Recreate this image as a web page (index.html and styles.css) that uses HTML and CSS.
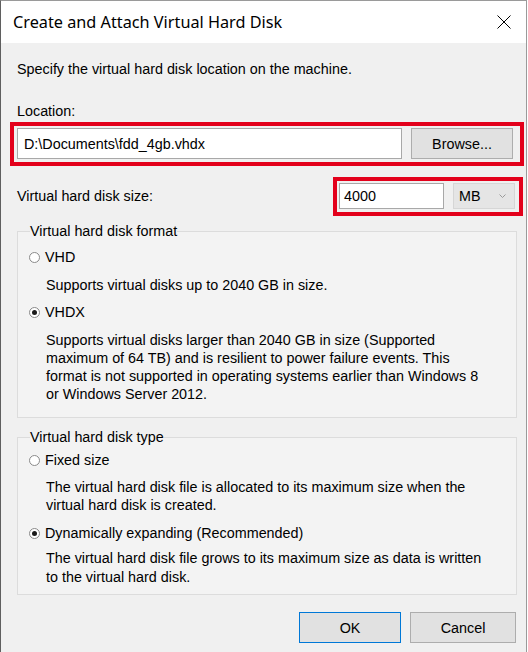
FILE: index.html
```html
<!DOCTYPE html>
<html>
<head>
<meta charset="utf-8">
<link rel="stylesheet" href="styles.css">
<title>Create and Attach Virtual Hard Disk</title>
</head>
<body>
<div class="window">
  <div class="titlebar">
    <span class="title">Create and Attach Virtual Hard Disk</span>
    <svg class="close" width="14" height="14" viewBox="0 0 14 14"><path d="M0.5 0.5 L13.5 13.5 M13.5 0.5 L0.5 13.5" stroke="#000" stroke-width="1" fill="none"/></svg>
  </div>
  <div class="content">
    <p class="intro">Specify the virtual hard disk location on the machine.</p>
    <p class="label loc-label">Location:</p>
    <div class="redbox loc-box">
      <div class="textbox path">D:\Documents\fdd_4gb.vhdx</div>
      <div class="button browse">Browse...</div>
    </div>
    <div class="size-row">
      <span class="label">Virtual hard disk size:</span>
      <div class="redbox size-box">
        <div class="textbox size">4000</div>
        <div class="combo"><span>MB</span>
          <svg class="chev" width="7" height="4" viewBox="0 0 7 4"><path d="M0.5 0.5 L3.5 3.5 L6.5 0.5" stroke="#9a9a9a" fill="none"/></svg>
        </div>
      </div>
    </div>
    <fieldset class="group g-format">
      <legend>Virtual hard disk format</legend>
      <div class="radio first"><span class="dot"></span><span>VHD</span></div>
      <p class="desc d1">Supports virtual disks up to 2040 GB in size.</p>
      <div class="radio r2"><span class="dot on"></span><span>VHDX</span></div>
      <p class="desc d2">Supports virtual disks larger than 2040 GB in size (Supported<br>maximum of 64 TB) and is resilient to power failure events. This<br>format is not supported in operating systems earlier than Windows 8<br>or Windows Server 2012.</p>
    </fieldset>
    <fieldset class="group g-type">
      <legend>Virtual hard disk type</legend>
      <div class="radio first"><span class="dot"></span><span>Fixed size</span></div>
      <p class="desc d1">The virtual hard disk file is allocated to its maximum size when the<br>virtual hard disk is created.</p>
      <div class="radio r2"><span class="dot on"></span><span>Dynamically expanding (Recommended)</span></div>
      <p class="desc d3">The virtual hard disk file grows to its maximum size as data is written<br>to the virtual hard disk.</p>
    </fieldset>
    <div class="actions">
      <div class="button ok">OK</div>
      <div class="button cancel">Cancel</div>
    </div>
  </div>
</div>
</body>
</html>
```
FILE: styles.css
```css
html, body {
  margin: 0;
  padding: 0;
  background: #ffffff;
}
body {
  font-family: "Liberation Sans", Arial, sans-serif;
  font-size: 14.35px;
  line-height: 18px;
  color: #000;
}
.window {
  width: 527px;
  height: 652px;
  box-sizing: border-box;
  border-left: 1px solid #5f5f5f;
  border-top: 1px solid #9a9a9a;
  border-right: 1px solid #9a9a9a;
  display: flex;
  flex-direction: column;
  background: #f0f0f0;
}
.titlebar {
  height: 42px;
  flex: none;
  background: #ffffff;
  display: flex;
  align-items: center;
  justify-content: space-between;
  padding: 0 15px 0 12px;
}
.title {
  font-family: "Noto Sans", "Open Sans", sans-serif;
  font-size: 16.25px;
  color: #000;
  margin-top: -1px;
}
.close {
  display: block;
  margin-top: -1px;
}
.content {
  padding: 0 10px 0 16px;
  display: flex;
  flex-direction: column;
}
p {
  margin: 0;
}
.intro {
  margin-top: 17px;
}
.loc-label {
  margin-top: 24px;
}
.redbox {
  border: 4px solid #e3001b;
  display: flex;
  align-items: stretch;
  box-sizing: border-box;
}
.loc-box {
  margin: 2px -8px 0 -7px;
  padding: 2px 6px 3px 3px;
  gap: 9px;
}
.textbox {
  background: #ffffff;
  border: 1px solid #a8a8a8;
  box-sizing: border-box;
  display: flex;
  align-items: center;
}
.path {
  width: 385px;
  height: 31px;
  padding-left: 6px;
}
.button {
  background: #e1e1e1;
  border: 1px solid #adadad;
  box-sizing: border-box;
  display: flex;
  align-items: center;
  justify-content: center;
}
.browse {
  width: 102px;
  height: 31px;
}
.size-row {
  margin-top: 11px;
  display: flex;
  align-items: center;
  justify-content: space-between;
}
.size-row .label {
  margin-top: -2px;
}
.size-box {
  margin-right: -7px;
  width: 190px;
  padding: 2px 4px 3px 2px;
  gap: 9px;
}
.size {
  width: 105px;
  height: 26px;
  padding-left: 4px;
}
.combo {
  width: 62px;
  height: 26px;
  box-sizing: border-box;
  background: #e5e5e5;
  border: 1px solid #d6d6d6;
  display: flex;
  align-items: center;
  justify-content: space-between;
  padding: 0 8px 0 5px;
}
.chev {
  display: block;
}
.group {
  margin: 0;
  border: 1px solid #dcdcdc;
  background: #f3f3f3;
  padding: 0 0 0 11px;
  min-width: 0;
  width: 500px;
  box-sizing: border-box;
}
.group legend {
  padding: 0;
  margin-left: 1px;
  line-height: 18px;
}
.g-format {
  margin-top: 6px;
  padding-bottom: 14px;
}
.g-type {
  margin-top: 10px;
  padding-bottom: 7px;
}
.radio {
  display: flex;
  align-items: center;
  gap: 5px;
}
.g-format .first {
  margin-top: 8px;
}
.g-type .first {
  margin-top: 5px;
}
.dot {
  width: 11px;
  height: 11px;
  box-sizing: border-box;
  border-radius: 50%;
  border: 1px solid #8a8a8a;
  background: #ffffff;
  display: flex;
  align-items: center;
  justify-content: center;
}
.dot.on::after {
  content: "";
  width: 5px;
  height: 5px;
  border-radius: 50%;
  background: #1a1a1a;
}
.desc {
  margin-left: 17px;
}
.g-format .d1 {
  margin-top: 10px;
}
.g-format .r2 {
  margin-top: 9px;
}
.g-format .d2 {
  margin-top: 10px;
}
.g-type .d1 {
  margin-top: 9px;
}
.g-type .r2 {
  margin-top: 10px;
}
.g-type .d3 {
  margin-top: 7px;
  line-height: 19px;
}
.actions {
  margin-top: 17px;
  display: flex;
  justify-content: flex-end;
  gap: 9px;
}
.ok {
  width: 102px;
  height: 31px;
  border: 1px solid #0078d7;
  box-shadow: inset 0 0 0 1px #e1e1e1;
}
.cancel {
  width: 106px;
  height: 31px;
}
```
